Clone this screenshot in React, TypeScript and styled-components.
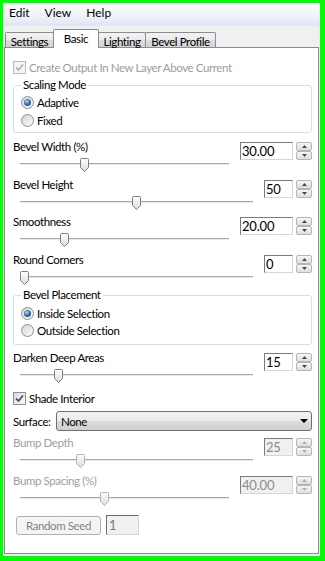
import React from 'react'
import styled, { createGlobalStyle, css } from 'styled-components'

const GlobalStyle = createGlobalStyle`
  html, body {
    margin: 0;
    padding: 0;
  }
  body {
    font-family: Lato, 'Liberation Sans', sans-serif;
    font-size: 11.5px;
    letter-spacing: -0.4px;
    color: #000;
  }
`

type FieldProps = {
  label: string
  value: number
  spin: string
  wide?: boolean
  disabled?: boolean
  mt: number
}

function Thumb({ value, disabled }: { value: number; disabled?: boolean }) {
  return (
    <ThumbSvg
      width="9"
      height="14"
      viewBox="0 0 9 14"
      style={{ left: `calc((100% - 9px) * ${value / 100})` }}
    >
      <defs>
        <linearGradient id="thumbFill" x1="0" y1="0" x2="0" y2="1">
          <stop offset="0" stopColor="#fdfdfd" />
          <stop offset="1" stopColor="#dcdcdc" />
        </linearGradient>
      </defs>
      <path
        d="M1.5 0.5 H7.5 Q8.5 0.5 8.5 1.5 V9.5 L4.5 13.5 L0.5 9.5 V1.5 Q0.5 0.5 1.5 0.5 Z"
        fill="url(#thumbFill)"
        stroke={disabled ? '#b4b4b4' : '#7d7d7d'}
      />
    </ThumbSvg>
  )
}

function Arrow({ up, disabled }: { up?: boolean; disabled?: boolean }) {
  return (
    <svg width="5" height="3" viewBox="0 0 5 3">
      <path d={up ? 'M0 3 L2.5 0 L5 3 Z' : 'M0 0 L5 0 L2.5 3 Z'} fill={disabled ? '#b0b0b0' : '#4a4a4a'} />
    </svg>
  )
}

function Spin({ text, wide, disabled }: { text: string; wide?: boolean; disabled?: boolean }) {
  return (
    <SpinWrap>
      <SpinInput $wide={wide} $disabled={disabled}>{text}</SpinInput>
      <SpinButtons>
        <SpinBtn><Arrow up disabled={disabled} /></SpinBtn>
        <SpinBtn><Arrow disabled={disabled} /></SpinBtn>
      </SpinButtons>
    </SpinWrap>
  )
}

function SliderField({ label, value, spin, wide, disabled, mt }: FieldProps) {
  return (
    <Field $mt={mt}>
      <FieldMain>
        <FieldLabel $disabled={disabled}>{label}</FieldLabel>
        <SliderBox>
          <Track />
          <Thumb value={value} disabled={disabled} />
        </SliderBox>
      </FieldMain>
      <Spin text={spin} wide={wide} disabled={disabled} />
    </Field>
  )
}

function CheckMark({ disabled }: { disabled?: boolean }) {
  return (
    <svg width="9" height="9" viewBox="0 0 9 9">
      <path d="M1 4.5 L3.5 7 L8 1.5" fill="none" stroke={disabled ? '#b3b3b3' : '#3a5577'} strokeWidth="1.8" />
    </svg>
  )
}

export default function App() {
  return (
    <>
      <GlobalStyle />
      <Frame>
        <MenuBar>
          <MenuItem>Edit</MenuItem>
          <MenuItem>View</MenuItem>
          <MenuItem>Help</MenuItem>
        </MenuBar>
        <TabStrip>
          <Tab $w={49}>Settings</Tab>
          <Tab $w={46} $active>Basic</Tab>
          <Tab $w={48}>Lighting</Tab>
          <Tab $w={71}>Bevel Profile</Tab>
        </TabStrip>
        <Panel>
          <OptionRow $disabled>
            <CheckBox $disabled><CheckMark disabled /></CheckBox>
            Create Output In New Layer Above Current
          </OptionRow>

          <Group $mt={2} $pt={0} $pb={3}>
            <Legend>Scaling Mode</Legend>
            <RadioRow $h={18}><Radio $checked />Adaptive</RadioRow>
            <RadioRow $h={18}><Radio />Fixed</RadioRow>
          </Group>

          <SliderField mt={6} label="Bevel Width (%)" value={30} spin="30.00" wide />
          <SliderField mt={6} label="Bevel Height" value={50} spin="50" />
          <SliderField mt={5} label="Smoothness" value={20} spin="20.00" wide />
          <SliderField mt={6} label="Round Corners" value={0} spin="0" />

          <Group $mt={3} $pt={2} $pb={5}>
            <Legend>Bevel Placement</Legend>
            <RadioRow $h={17}><Radio $checked />Inside Selection</RadioRow>
            <RadioRow $h={17}><Radio />Outside Selection</RadioRow>
          </Group>

          <SliderField mt={5} label="Darken Deep Areas" value={15} spin="15" />

          <OptionRow $mt={8}>
            <CheckBox><CheckMark /></CheckBox>
            Shade Interior
          </OptionRow>

          <SurfaceRow>
            <SurfaceLabel>Surface:</SurfaceLabel>
            <Select>
              <span>None</span>
              <svg width="8" height="4" viewBox="0 0 8 4">
                <path d="M0 0 L8 0 L4 4 Z" fill="#000" />
              </svg>
            </Select>
          </SurfaceRow>

          <SliderField mt={4} label="Bump Depth" value={25} spin="25" disabled />
          <SliderField mt={6} label="Bump Spacing (%)" value={40} spin="40.00" wide disabled />

          <SeedRow>
            <SeedButton>Random Seed</SeedButton>
            <SeedInput>1</SeedInput>
          </SeedRow>
        </Panel>
      </Frame>
    </>
  )
}

const Frame = styled.div`
  width: 325px;
  height: 561px;
  box-sizing: border-box;
  border-style: solid;
  border-color: #00ff00;
  border-width: 3px 5px 5px 3px;
  background: #f0f0f0;
  display: flex;
  flex-direction: column;
`

const MenuBar = styled.div`
  height: 23px;
  flex-shrink: 0;
  display: flex;
  gap: 15px;
  padding-left: 6px;
  font-size: 12px;
  letter-spacing: 0;
  background: linear-gradient(#fbfcfe 0%, #f0f3f8 55%, #dde6f1 100%);
`

const MenuItem = styled.span`
  line-height: 20px;
`

const TabStrip = styled.div`
  height: 22px;
  flex-shrink: 0;
  display: flex;
  align-items: flex-end;
  padding-left: 2px;
  margin-bottom: -1px;
  position: relative;
  z-index: 1;
`

const Tab = styled.div<{ $w: number; $active?: boolean }>`
  width: ${p => p.$w}px;
  height: 15px;
  box-sizing: border-box;
  margin: 0 -1px 1px 0;
  border: 1px solid #898c95;
  border-bottom: none;
  border-radius: 2px 2px 0 0;
  background: linear-gradient(#f3f3f3 0%, #ebebeb 50%, #dddddd 51%, #d2d2d2 100%);
  text-align: center;
  line-height: 17px;

  ${p => p.$active && css`
    height: 19px;
    margin-bottom: 0;
    background: #fff;
    line-height: 17px;
    position: relative;
    z-index: 1;
  `}
`

const Panel = styled.div`
  flex: 1;
  margin: 0 1px 2px 1px;
  border: 1px solid #898c95;
  background: #fff;
  padding: 11px 6px 0 8px;
  display: flex;
  flex-direction: column;
`

const OptionRow = styled.div<{ $disabled?: boolean; $mt?: number }>`
  display: flex;
  align-items: center;
  gap: 3px;
  height: 16px;
  margin-top: ${p => p.$mt || 0}px;
  color: ${p => (p.$disabled ? '#9d9d9d' : '#000')};
`

const CheckBox = styled.span<{ $disabled?: boolean }>`
  width: 13px;
  height: 13px;
  box-sizing: border-box;
  border: 1px solid ${p => (p.$disabled ? '#bcbcbc' : '#8e8f8f')};
  background: ${p => (p.$disabled ? '#f4f4f4' : 'linear-gradient(135deg, #dcdcdc, #fbfbfb)')};
  display: inline-flex;
  align-items: center;
  justify-content: center;
`

const Group = styled.fieldset<{ $mt: number; $pt: number; $pb: number }>`
  margin: ${p => p.$mt}px 0 0 0;
  padding: ${p => p.$pt}px 7px ${p => p.$pb}px 7px;
  border: 1px solid #d5dfe5;
  border-radius: 3px;
  min-width: 0;
`

const Legend = styled.legend`
  padding: 0 2px;
  line-height: 16px;
`

const RadioRow = styled.div<{ $h: number }>`
  display: flex;
  align-items: center;
  gap: 3px;
  height: ${p => p.$h}px;
`

const Radio = styled.span<{ $checked?: boolean }>`
  width: 13px;
  height: 13px;
  box-sizing: border-box;
  border-radius: 50%;
  border: 1px solid #8e8f8f;
  background: linear-gradient(135deg, #d4d4d4, #fbfbfb);
  display: inline-flex;
  align-items: center;
  justify-content: center;

  &::after {
    content: '';
    width: 7px;
    height: 7px;
    border-radius: 50%;
    background: radial-gradient(circle at 40% 35%, #b5dcfb 0%, #3a73b5 45%, #12386a 100%);
    display: ${p => (p.$checked ? 'block' : 'none')};
  }
`

const Field = styled.div<{ $mt: number }>`
  display: flex;
  align-items: flex-start;
  gap: 8px;
  margin-top: ${p => p.$mt}px;
`

const FieldMain = styled.div`
  flex: 1;
  min-width: 0;
`

const FieldLabel = styled.div<{ $disabled?: boolean }>`
  height: 16px;
  line-height: 16px;
  color: ${p => (p.$disabled ? '#a0a0a0' : '#000')};
`

const SliderBox = styled.div`
  position: relative;
  height: 16px;
  margin: 0 3px 0 7px;
`

const Track = styled.div`
  position: absolute;
  left: 0;
  right: 0;
  top: 8px;
  height: 2px;
  box-sizing: border-box;
  border-top: 1px solid #a8a8a8;
  background: #e9e9e9;
`

const ThumbSvg = styled.svg`
  position: absolute;
  top: 3px;
`

const SpinWrap = styled.div`
  display: flex;
  gap: 3px;
  margin-top: 3px;
`

const SpinInput = styled.div<{ $wide?: boolean; $disabled?: boolean }>`
  width: ${p => (p.$wide ? 53 : 29)}px;
  height: 18px;
  box-sizing: border-box;
  border: 1px solid;
  border-color: #7a7a7a #d6d6d6 #d6d6d6 #7a7a7a;
  background: ${p => (p.$disabled ? '#f0f0f0' : '#fff')};
  color: ${p => (p.$disabled ? '#8c8c8c' : '#000')};
  padding-left: 1px;
  line-height: 16px;
  font-size: 13px;
  letter-spacing: -0.2px;
`

const SpinButtons = styled.div`
  display: flex;
  flex-direction: column;
`

const SpinBtn = styled.div`
  width: 16px;
  height: 9px;
  box-sizing: border-box;
  border: 1px solid #b5b5b5;
  border-radius: 2px;
  background: linear-gradient(#f6f6f6, #dedede);
  display: flex;
  align-items: center;
  justify-content: center;
`

const SurfaceRow = styled.div`
  display: flex;
  align-items: center;
  height: 20px;
  margin-top: 5px;
`

const SurfaceLabel = styled.span`
  width: 43px;
  flex-shrink: 0;
`

const Select = styled.div`
  flex: 1;
  height: 20px;
  box-sizing: border-box;
  border: 1px solid #707070;
  border-radius: 3px;
  background: linear-gradient(#f2f2f2 0%, #ebebeb 50%, #dddddd 51%, #cfcfcf 100%);
  display: flex;
  align-items: center;
  justify-content: space-between;
  padding: 0 3px 0 4px;
`

const SeedRow = styled.div`
  display: flex;
  align-items: center;
  gap: 5px;
  height: 20px;
  margin-top: 10px;
  padding-left: 3px;
`

const SeedButton = styled.div`
  width: 85px;
  height: 19px;
  box-sizing: border-box;
  border: 1px solid #adb2b5;
  border-radius: 3px;
  background: #f4f4f4;
  color: #838383;
  text-align: center;
  line-height: 17px;
`

const SeedInput = styled.div`
  width: 33px;
  height: 20px;
  box-sizing: border-box;
  border: 1px solid;
  border-color: #6d6d6d #d5d5d5 #d5d5d5 #6d6d6d;
  background: #f0f0f0;
  color: #7a7a7a;
  padding-left: 2px;
  line-height: 18px;
  font-size: 13px;
`
